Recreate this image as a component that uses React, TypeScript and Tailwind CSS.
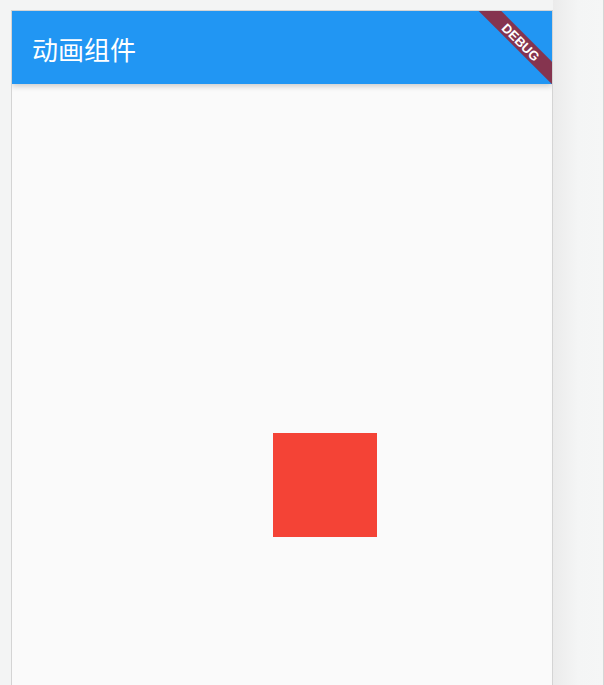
import React from "react";

export default function App() {
  return (
    <div className="w-[604px] h-[685px] overflow-hidden bg-[#f3f4f4] flex">
      <div className="w-[11px] shrink-0" />
      <div className="mt-[10px] w-[542px] h-[700px] shrink-0 border border-[#d4d4d4] bg-[#fafafa] relative overflow-hidden flex flex-col">
        <div className="h-[73px] shrink-0 bg-[#2196f3] flex items-center pl-[20px] shadow-[0_2px_6px_rgba(0,0,0,0.2)] relative z-10">
          <span
            className="text-white text-[26px] leading-none mt-[3px]"
            style={{ fontFamily: '"Noto Sans CJK SC", "Noto Sans", sans-serif' }}
          >
            动画组件
          </span>
        </div>
        <div className="flex-1 pl-[261px] pt-[349px]">
          <div className="w-[104px] h-[104px] bg-[#f44336]" />
        </div>
        <div className="absolute z-20 top-[23px] right-[-29px] w-[120px] h-[16px] rotate-45 bg-[#85344f] flex items-center justify-center">
          <span
            className="text-white text-[13px] font-bold leading-none"
            style={{ fontFamily: '"Liberation Sans", Arial, sans-serif' }}
          >
            DEBUG
          </span>
        </div>
      </div>
      <div className="flex-1 bg-gradient-to-r from-[#ebebeb] via-[#f4f5f5] to-[#f5f6f6] border-r border-[#d6d6d6]" />
    </div>
  );
}
